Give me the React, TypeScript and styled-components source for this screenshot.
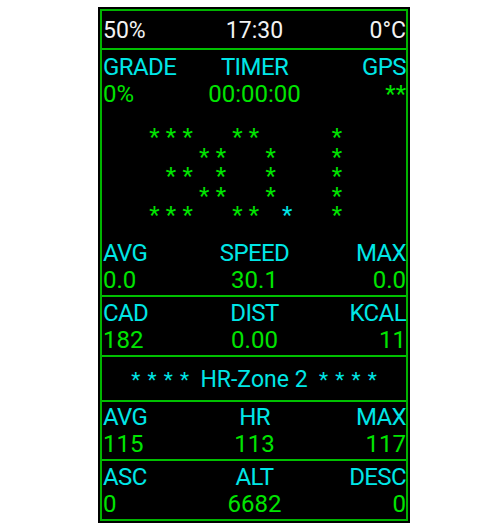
import React from "react";
import styled, { createGlobalStyle } from "styled-components";

const GlobalStyle = createGlobalStyle`
  html, body { margin: 0; padding: 0; background: #ffffff; }
  * { box-sizing: border-box; }
`;

const GREEN = "#00e400";
const CYAN = "#00e6e6";
const WHITE = "#f2f2f2";
const LINE = "#00c000";

const Page = styled.div`
  padding: 7px 0 0 98px;
`;

const Device = styled.div`
  width: 312px;
  height: 516px;
  background: #000;
  padding: 2px;
`;

const Frame = styled.div`
  height: 100%;
  border: 2px solid #00b400;
  display: flex;
  flex-direction: column;
  font-family: Roboto, "Noto Sans", sans-serif;
`;

const Section = styled.div<{ $pt: number; $pb: number; $first?: boolean }>`
  padding-top: ${(p) => p.$pt}px;
  padding-bottom: ${(p) => p.$pb}px;
  border-top: ${(p) => (p.$first ? "none" : `2px solid ${LINE}`)};
`;

const TriRow = styled.div<{ $size: number; $tight?: boolean }>`
  display: grid;
  grid-template-columns: 1fr auto 1fr;
  padding-left: 1px;
  font-size: ${(p) => p.$size}px;
  line-height: 27px;
  letter-spacing: ${(p) => (p.$tight ? "-0.6px" : "0")};
  white-space: nowrap;
`;

const Cell = styled.span<{ $align: "left" | "center" | "right"; $color: string }>`
  text-align: ${(p) => p.$align};
  color: ${(p) => p.$color};
`;

const StarGrid = styled.div`
  display: grid;
  grid-template-columns: repeat(13, 16.6px);
  grid-auto-rows: 19.6px;
  justify-content: center;
  margin: 20px 0 14px;
  font-size: 24px;
  line-height: 19.6px;
`;

const Star = styled.span<{ $color: string }>`
  color: ${(p) => p.$color};
  text-align: center;
`;

const Banner = styled.div`
  text-align: center;
  color: ${CYAN};
  font-size: 23px;
  line-height: 39px;
  white-space: pre;
`;

const BannerStars = styled.span`
  font-size: 21px;
  word-spacing: 2px;
`;

type Triple = [string, string, string];

function Trio({ labels, values, size = 24, labelColor = CYAN, valueColor = GREEN, tight = true }: {
  labels: Triple;
  values?: Triple;
  size?: number;
  labelColor?: string;
  valueColor?: string;
  tight?: boolean;
}) {
  const aligns: ("left" | "center" | "right")[] = ["left", "center", "right"];
  return (
    <>
      <TriRow $size={size} $tight={tight}>
        {labels.map((l, i) => (
          <Cell key={i} $align={aligns[i]} $color={labelColor}>{l}</Cell>
        ))}
      </TriRow>
      {values && (
        <TriRow $size={size}>
          {values.map((v, i) => (
            <Cell key={i} $align={aligns[i]} $color={valueColor}>{v}</Cell>
          ))}
        </TriRow>
      )}
    </>
  );
}

const pattern = [
  "***..**....*.",
  "...**..*...*.",
  ".**.*..*...*.",
  "...**..*...*.",
  "***..**.c..*.",
];

export default function App() {
  return (
    <>
      <GlobalStyle />
      <Page>
        <Device>
          <Frame>
            <Section $first $pt={6} $pb={4}>
              <Trio labels={["50%", "17:30", "0°C"]} size={23} labelColor={WHITE} tight={false} />
            </Section>
            <Section $pt={4} $pb={1}>
              <Trio labels={["GRADE", "TIMER", "GPS"]} values={["0%", "00:00:00", "**"]} />
              <StarGrid>
                {pattern.flatMap((row, r) =>
                  row.split("").map((ch, c) => (
                    <Star key={`${r}-${c}`} $color={ch === "c" ? CYAN : GREEN}>
                      {ch === "." ? "" : "*"}
                    </Star>
                  ))
                )}
              </StarGrid>
              <Trio labels={["AVG", "SPEED", "MAX"]} values={["0.0", "30.1", "0.0"]} />
            </Section>
            <Section $pt={3} $pb={1}>
              <Trio labels={["CAD", "DIST", "KCAL"]} values={["182", "0.00", "11"]} />
            </Section>
            <Section $pt={3} $pb={0}>
              <Banner>
                <BannerStars>* * * *</BannerStars>{"  HR-Zone 2  "}<BannerStars>* * * *</BannerStars>
              </Banner>
            </Section>
            <Section $pt={2} $pb={1}>
              <Trio labels={["AVG", "HR", "MAX"]} values={["115", "113", "117"]} />
            </Section>
            <Section $pt={3} $pb={2}>
              <Trio labels={["ASC", "ALT", "DESC"]} values={["0", "6682", "0"]} />
            </Section>
          </Frame>
        </Device>
      </Page>
    </>
  );
}
